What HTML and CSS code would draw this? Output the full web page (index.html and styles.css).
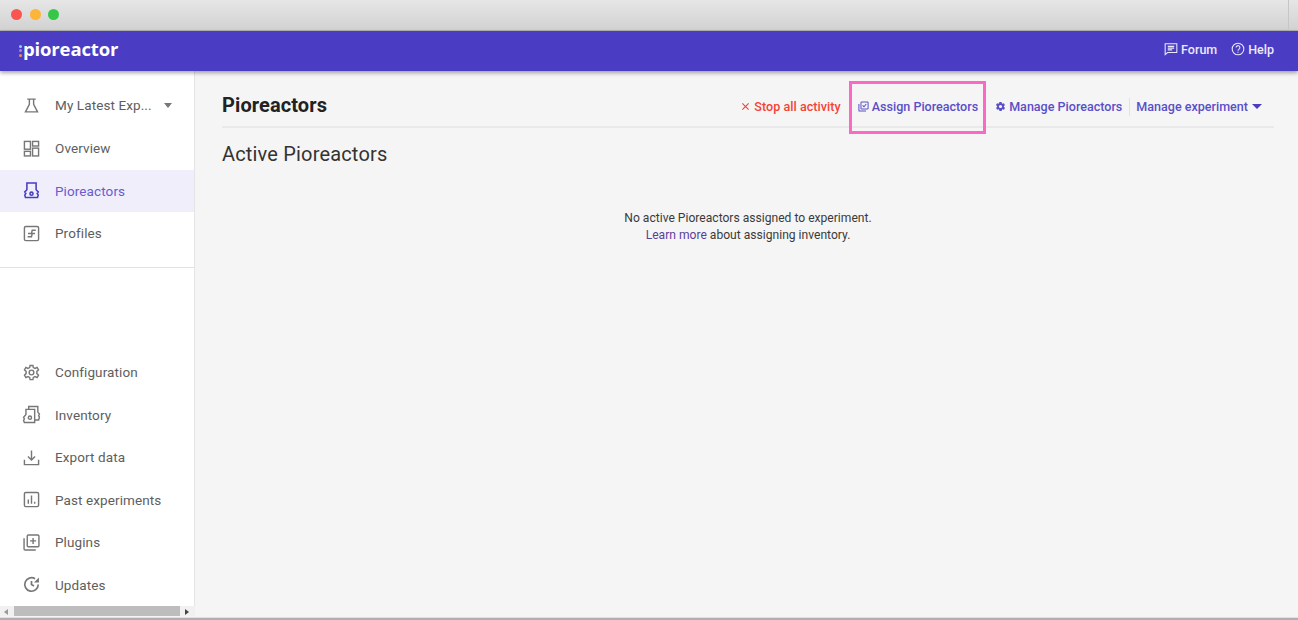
FILE: index.html
```html
<!DOCTYPE html>
<html lang="en">
<head>
<meta charset="utf-8">
<title>Pioreactor</title>
<link rel="stylesheet" href="styles.css">
</head>
<body>
<div class="window">
  <div class="titlebar">
    <span class="dot dot-red"></span><span class="dot dot-yellow"></span><span class="dot dot-green"></span>
    <span class="titlebar-edge"></span>
  </div>
  <header class="appbar">
    <div class="logo">
      <span class="logo-dots"><i class="ld ld1"></i><i class="ld ld2"></i><i class="ld ld3"></i></span>
      <span class="logo-text">pioreactor</span>
    </div>
    <nav class="appbar-links">
      <a class="appbar-link">
        <svg class="ic16" viewBox="0 0 24 24" fill="none" stroke="currentColor" stroke-width="1.8"><path d="M2 3h20v15H6l-4 3.500z"/><path d="M6.500 7.500h11M6.500 10.500h11M6.500 13.500h7.500"/></svg>
        Forum
      </a>
      <a class="appbar-link">
        <svg class="ic16" viewBox="0 0 24 24" fill="none" stroke="currentColor" stroke-width="1.8"><circle cx="12" cy="12" r="10"/><path d="M8.800 9.500a3.200 3.200 0 1 1 4.900 2.700c-1.100.7-1.700 1.300-1.700 2.700"/><path d="M12 16.500v2"/></svg>
        Help
      </a>
    </nav>
  </header>
  <div class="body">
    <aside class="sidebar">
      <div class="side-top">
        <div class="side-item side-select">
          <svg class="side-ic" viewBox="0 0 24 24" fill="none" stroke="currentColor" stroke-width="2"><path d="M6 3h12M9 3v7.500L3.500 21h17L15 10.500V3"/></svg>
          <span class="side-label">My Latest Exp...</span>
          <span class="caret caret-grey"></span>
        </div>
        <div class="side-item">
          <svg class="side-ic" viewBox="0 0 24 24" fill="none" stroke="currentColor" stroke-width="2"><rect x="2" y="2" width="8.500" height="11"/><rect x="13.500" y="2" width="8.500" height="6.500"/><rect x="2" y="16" width="8.500" height="6.500"/><rect x="13.500" y="11.500" width="8.500" height="11"/></svg>
          <span class="side-label">Overview</span>
        </div>
        <div class="side-item side-active">
          <svg class="side-ic" viewBox="0 0 24 24" fill="none" stroke="currentColor" stroke-width="2.200"><path d="M5.500 1.500h13V11l3 3-1.500 2.200 1.500 2.300-1 3.500H3.500l-1-3.500L4 16.200 2.500 14l3-3z"/><circle cx="12" cy="16.500" r="2.200"/></svg>
          <span class="side-label">Pioreactors</span>
        </div>
        <div class="side-item">
          <svg class="side-ic" viewBox="0 0 24 24" fill="none" stroke="currentColor" stroke-width="2"><rect x="2" y="2" width="20" height="20" rx="2"/><path d="M18 7.500h-5l-1 4.500H7M17 12h-4l-1 4.500H6.500"/></svg>
          <span class="side-label">Profiles</span>
        </div>
      </div>
      <div class="side-bottom">
        <div class="side-item">
          <svg class="side-ic" viewBox="0 0 24 24" fill="none" stroke="currentColor" stroke-width="2"><circle cx="12" cy="12" r="3.300"/><path d="M10 2h4l.6 3 2.500 1.200 2.800-1.300 2 3.500-2.300 2v3.200l2.300 2-2 3.500-2.800-1.300-2.500 1.200-.6 3h-4l-.6-3-2.500-1.200-2.800 1.300-2-3.500 2.300-2v-3.200l-2.300-2 2-3.500 2.800 1.300L9.400 5z"/></svg>
          <span class="side-label">Configuration</span>
        </div>
        <div class="side-item">
          <svg class="side-ic side-ic-wide" viewBox="0 0 24 24" fill="none" stroke="currentColor" stroke-width="1.800"><path d="M5 12V5.500h11V22H3l-1-2.500 1-2-1-2z"/><path d="M8.500 5.500V2H20v7l2 2.500-1 2 1 2-1 3.500h-5"/><circle cx="10" cy="16" r="2"/></svg>
          <span class="side-label">Inventory</span>
        </div>
        <div class="side-item">
          <svg class="side-ic" viewBox="0 0 24 24" fill="none" stroke="currentColor" stroke-width="2"><path d="M12 2v13.500M7 10.500l5 5 5-5"/><path d="M2 15v7h20v-7"/></svg>
          <span class="side-label">Export data</span>
        </div>
        <div class="side-item">
          <svg class="side-ic" viewBox="0 0 24 24" fill="none" stroke="currentColor" stroke-width="2"><rect x="2" y="2" width="20" height="20" rx="2"/><path d="M7.500 18v-6M12 18V6.500M16.500 18v-3"/></svg>
          <span class="side-label">Past experiments</span>
        </div>
        <div class="side-item">
          <svg class="side-ic" viewBox="0 0 24 24" fill="none" stroke="currentColor" stroke-width="2"><rect x="6" y="1.500" width="16.500" height="16.500" rx="1.500"/><path d="M14.250 5.500v8.500M10 9.750h8.500"/><path d="M1.500 6v15a1.500 1.500 0 0 0 1.500 1.500h15"/></svg>
          <span class="side-label">Plugins</span>
        </div>
        <div class="side-item">
          <svg class="side-ic" viewBox="0 0 24 24" fill="none" stroke="currentColor" stroke-width="2.400"><path d="M21.500 12A9.500 9.500 0 1 1 17 3.900"/><path d="M12 7v5l3.500 2"/><path d="M22.500 2v7h-7z" fill="currentColor" stroke="none"/></svg>
          <span class="side-label">Updates</span>
        </div>
      </div>
    </aside>
    <main class="main">
      <div class="page-head">
        <h1 class="page-title">Pioreactors</h1>
        <div class="actions">
          <a class="action action-red">
            <svg class="ic-x" viewBox="0 0 10 10" fill="none" stroke="currentColor" stroke-width="1.200"><path d="M1.500 1.500l7 7M8.500 1.500l-7 7"/></svg>
            Stop all activity
          </a>
          <a class="action action-assign">
            <svg class="ic13" viewBox="0 0 24 24" fill="none" stroke="currentColor" stroke-width="2.200"><rect x="6.500" y="2" width="15.500" height="15.500" rx="1.500"/><path d="M2 6.500V21a1 1 0 0 0 1 1h14.500"/><path d="M10 9.500l3 3 5-6"/></svg>
            Assign Pioreactors
          </a>
          <a class="action action-manage">
            <svg class="ic13" viewBox="0 0 24 24" fill="currentColor"><path fill-rule="evenodd" d="M19.400 13c.1-.3.100-.7.100-1s0-.7-.1-1l2.100-1.600c.2-.1.200-.4.100-.6l-2-3.500c-.1-.2-.4-.3-.6-.2l-2.500 1c-.5-.4-1.100-.7-1.700-1l-.4-2.600c0-.3-.2-.5-.5-.5h-4c-.3 0-.5.200-.5.500l-.4 2.600c-.6.300-1.200.6-1.700 1l-2.500-1c-.2-.1-.5 0-.6.200l-2 3.500c-.1.200-.1.500.1.600L4.600 11c-.1.300-.1.700-.1 1s0 .7.100 1l-2.100 1.600c-.2.100-.2.400-.1.600l2 3.500c.1.200.4.300.6.200l2.500-1c.5.400 1.100.7 1.700 1l.4 2.600c0 .3.200.5.500.5h4c.3 0 .5-.2.500-.5l.4-2.600c.6-.3 1.200-.6 1.700-1l2.500 1c.2.100.5 0 .6-.2l2-3.500c.1-.2.100-.5-.1-.6zM12 15.500a3.500 3.500 0 1 1 0-7 3.500 3.500 0 0 1 0 7z"/></svg>
            Manage Pioreactors
          </a>
          <a class="action action-exp">
            Manage experiment
            <span class="caret caret-blue"></span>
          </a>
        </div>
      </div>
      <h2 class="section-title">Active Pioreactors</h2>
      <div class="empty">
        <p class="empty-line">No active Pioreactors assigned to experiment.</p>
        <p class="empty-line"><a class="empty-link">Learn more</a> about assigning inventory.</p>
      </div>
    </main>
  </div>
  <div class="hscroll">
    <span class="arrow arrow-left"></span>
    <span class="thumb"></span>
    <span class="arrow arrow-right"></span>
  </div>
  <div class="highlight"></div>
  <div class="window-edge"></div>
</div>
</body>
</html>
```

FILE: styles.css
```css
* { box-sizing: border-box; }
html, body { margin: 0; padding: 0; }
body { font-family: Roboto, "Liberation Sans", sans-serif; background: #f5f5f5; color: #333; }
.window { position: relative; width: 1298px; height: 620px; overflow: hidden; display: flex; flex-direction: column; background: #f5f5f5; }

.titlebar { flex: 0 0 31px; display: flex; align-items: center; gap: 7.500px; padding: 0 9px 1px 11px; background: linear-gradient(#e6e6e6, #d2d2d2); border-bottom: 1px solid #b4b4b4; }
.dot { width: 11px; height: 11px; border-radius: 50%; }
.dot-red { background: #fb5551; }
.dot-yellow { background: #fcb43a; }
.dot-green { background: #37c748; }
.titlebar-edge { margin-left: auto; width: 1px; align-self: stretch; background: #c6c6c6; }

.appbar { flex: 0 0 40px; display: flex; align-items: center; justify-content: space-between; padding: 0 24px 4px 19px; background: #4a3dc4; color: #fff; box-shadow: 0 2px 4px rgba(0,0,0,.35); position: relative; z-index: 2; }
.logo { display: flex; align-items: center; }
.logo-dots { display: flex; flex-direction: column; gap: 1.500px; margin: 3px 1px 0 0; }
.ld { display: block; width: 3px; height: 3px; border-radius: 50%; }
.ld1 { background: #8fd3e8; }
.ld2 { background: #b87fd0; }
.ld3 { background: #e8935a; }
.logo-text { font-family: "Open Sans", sans-serif; font-weight: 700; font-size: 18.500px; line-height: 24px; letter-spacing: -.15px; }
.appbar-links { display: flex; gap: 14px; }
.appbar-link { display: flex; align-items: center; gap: 3px; font-size: 12.500px; font-weight: 500; color: #ece9fb; }
.ic16 { width: 14px; height: 14px; }

.body { flex: 1; display: flex; min-height: 0; }
.sidebar { flex: 0 0 195px; display: flex; flex-direction: column; background: #fff; border-right: 1px solid #e4e4e4; color: #5e5e5e; padding-top: 13px; }
.side-top { height: 184px; border-bottom: 1px solid #e2e2e2; }
.side-bottom { margin-top: 83px; }
.side-item { height: 42.500px; display: flex; align-items: center; padding-left: 23px; font-size: 13.500px; letter-spacing: .1px; }
.side-select { margin-bottom: .5px; }
.side-active { background: #f0eefb; color: #6a5bd0; }
.side-ic { flex: 0 0 17px; width: 17px; height: 17px; margin-right: 15px; color: #777; }
.side-active .side-ic { color: #4a3dc4; }
.side-ic-wide { flex-basis: 19px; width: 19px; height: 19px; margin: 0 14px 0 -1px; }
.side-label { white-space: nowrap; }
.side-select .side-label { width: 96px; }
.caret { display: inline-block; width: 0; height: 0; border-left: 5px solid transparent; border-right: 5px solid transparent; border-top: 5px solid #777; }
.caret-grey { margin-left: 13px; border-left-width: 4.500px; border-right-width: 4.500px; }
.caret-blue { border-top-color: #4a3dc4; margin-left: 4px; }

.main { flex: 1; min-width: 0; padding: 0 24px 0 27px; }
.page-head { height: 57px; padding-top: 12px; display: flex; align-items: center; justify-content: space-between; border-bottom: 2px solid #e9e9e9; }
.page-title { margin: 0; font-size: 20px; font-weight: 700; color: #222; letter-spacing: .1px; }
.actions { display: flex; align-items: center; font-size: 12.550px; font-weight: 500; color: #4a3dc4; padding: 4px 12px 0 0; }
.action { display: flex; align-items: center; white-space: nowrap; }
.action-red { color: #f44336; gap: 4px; letter-spacing: .05px; }
.action-assign { margin-left: 17px; gap: 3px; color: #5a4fc8; }
.action-manage { margin-left: 17px; gap: 3px; color: #5a4fc8; }
.action-exp { margin-left: 7px; padding-left: 6px; border-left: 1px solid #e2e2e2; line-height: 18px; color: #5a4fc8; }
.ic-x { width: 9px; height: 9px; }
.ic13 { width: 11px; height: 11px; }

.section-title { margin: 13px 0 0; font-size: 20px; line-height: 26px; font-weight: 400; color: #333; letter-spacing: .17px; }
.empty { margin-top: 43px; text-align: center; font-size: 12.100px; line-height: 17px; color: #3a3a3a; }
.empty-line { margin: 0; }
.empty-link { color: #5b3f9a; }

.hscroll { position: absolute; left: 0; bottom: 2px; width: 195px; height: 12px; display: flex; align-items: center; background: #f1f1f1; }
.thumb { flex: 0 0 166px; height: 12px; margin: 0 0 0 6px; background: #bdbdbd; }
.arrow { width: 0; height: 0; border-top: 3px solid transparent; border-bottom: 3px solid transparent; }
.arrow-left { margin-left: 4px; border-right: 4px solid #999; }
.arrow-right { margin-left: 5px; border-left: 4px solid #444; }

.highlight { position: absolute; left: 849px; top: 81px; width: 137px; height: 53px; border: 3px solid #fb69c4; z-index: 3; }
.window-edge { position: absolute; left: 0; right: 0; bottom: 0; height: 4px; background: linear-gradient(#f5f5f5 0 1px, #e0e0e0 1px 2px, #b5adb5 2px); z-index: 1; }
```
